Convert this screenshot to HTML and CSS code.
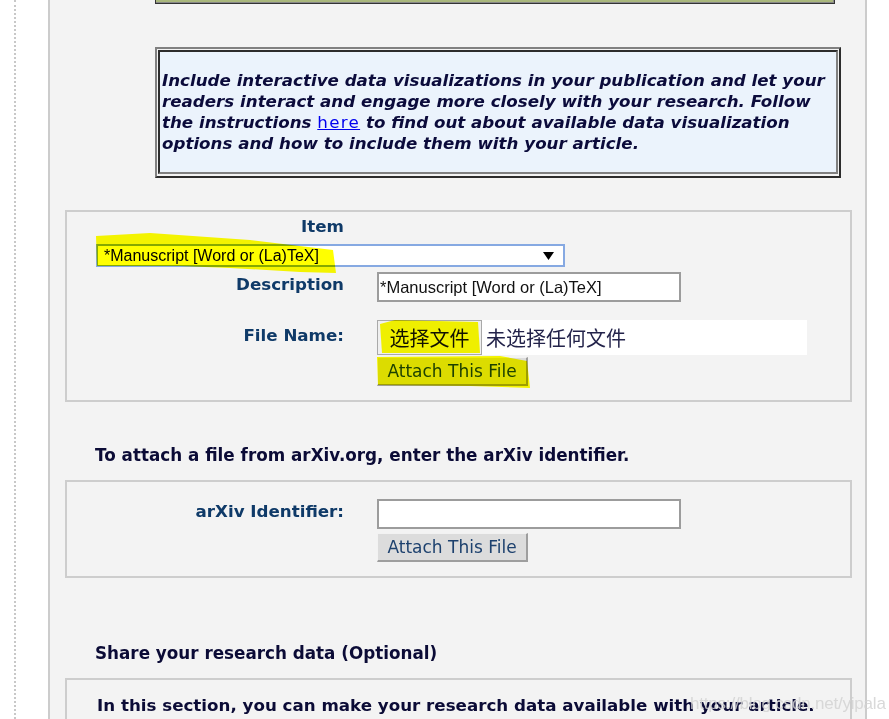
FILE: index.html
```html
<!DOCTYPE html>
<html>
<head>
<meta charset="utf-8">
<link rel="stylesheet" href="styles.css">
</head>
<body>
<div class="page">
  <div class="gutter"></div>
  <div class="panel">
    <div class="topbox"></div>
    <div class="info">
      <div class="info-inner">
        <p class="info-text">Include interactive data visualizations in your publication and let your readers interact and engage more closely with your research. Follow the instructions <a href="#" class="link">here</a> to find out about available data visualization options and how to include them with your article.</p>
      </div>
    </div>

    <div class="box upload">
      <div class="row row-item"><div class="label">Item</div></div>
      <div class="select">
        <span class="select-text">*Manuscript [Word or (La)TeX]</span>
        <svg class="arrow" width="11" height="8" viewBox="0 0 11 8"><path d="M0 0H11L5.5 8Z" fill="#000"/></svg>
      </div>
      <div class="row row-desc">
        <div class="label">Description</div>
        <div class="field"><div class="text-input">*Manuscript [Word or (La)TeX]</div></div>
      </div>
      <div class="row row-file">
        <div class="label label-file">File Name:</div>
        <div class="field">
          <div class="file">
            <span class="choose">选择文件</span>
            <span class="nofile">未选择任何文件</span>
          </div>
          <span class="btn">Attach This File</span>
        </div>
      </div>
    </div>

    <p class="heading heading-arxiv">To attach a file from arXiv.org, enter the arXiv identifier.</p>

    <div class="box arxiv">
      <div class="row row-arxiv">
        <div class="label">arXiv Identifier:</div>
        <div class="field">
          <div class="text-input"></div>
          <span class="btn btn-arxiv">Attach This File</span>
        </div>
      </div>
    </div>

    <p class="heading heading-share">Share your research data (Optional)</p>

    <div class="box share">
      <p class="share-text">In this section, you can make your research data available with your article.</p>
    </div>
  </div>
</div>

<svg class="highlight" width="889" height="719" viewBox="0 0 889 719">
  <polygon points="96,236 150,233 250,240 333,250 336,273 300,272 230,268 180,266 97,266" fill="#ffff00"/>
  <polygon points="380,324 395,320 478,322 480,353 382,353" fill="#ffff00"/>
  <polygon points="377,357 500,356 527,361 530,388 470,386 378,385" fill="#ffff00"/>
</svg>
<div class="watermark">https://blog.csdn.net/yipala</div>
</body>
</html>
```

FILE: styles.css
```css
html, body {
  margin: 0;
  padding: 0;
  overflow: hidden;
  background: #ffffff;
}
body {
  position: relative;
  width: 889px;
  height: 719px;
  font-family: "DejaVu Sans", Verdana, sans-serif;
}
.page {
  display: flex;
  align-items: flex-start;
}
.gutter {
  width: 14px;
  height: 719px;
  border-right: 2px dotted #c8c8c8;
}
.panel {
  margin-left: 32px;
  width: 815px;
  height: 719px;
  overflow: hidden;
  background: #f3f3f3;
  border-left: 2px solid #cccccc;
  border-right: 2px solid #cccccc;
}
.topbox {
  margin-left: 105px;
  width: 680px;
  height: 4px;
  box-sizing: border-box;
  background: #a9b77c;
  border-left: 1px solid #333;
  border-right: 1px solid #333;
  border-bottom: 1px solid #333;
  box-shadow: inset -1px -1px 0 #888;
}
.info {
  margin-left: 105px;
  margin-top: 43px;
  width: 686px;
  box-sizing: border-box;
  padding: 1px 1px 2px 1px;
  border: 2px solid;
  border-color: #808080 #2c2c2c #2c2c2c #808080;
}
.info-inner {
  border: 2px solid;
  border-color: #2c2c2c #808080 #808080 #2c2c2c;
  background: #ebf3fc;
  padding: 18px 4px 18px 2px;
}
.info-text {
  margin: 0;
  font-size: 16.7px;
  line-height: 21px;
  font-weight: bold;
  font-style: italic;
  color: #0b0b3b;
}
.link {
  color: #0000ee;
  font-weight: normal;
  font-style: normal;
  letter-spacing: 1.3px;
  text-decoration: underline;
}
.box {
  margin-left: 15px;
  width: 787px;
  box-sizing: border-box;
  border: 2px solid #cdcdcd;
}
.upload {
  margin-top: 32px;
  padding: 4px 0 14px 0;
}
.row {
  display: flex;
  align-items: flex-start;
  gap: 33px;
}
.label {
  width: 277px;
  flex: none;
  text-align: right;
  font-size: 16.7px;
  font-weight: bold;
  color: #0f3a68;
  line-height: 20px;
}
.select {
  margin: 8px 0 0 29px;
  width: 469px;
  height: 23px;
  box-sizing: border-box;
  border: 2px solid #86a9e2;
  background: #fff;
  display: flex;
  align-items: center;
  justify-content: space-between;
  padding: 0 9px 0 6px;
}
.select-text {
  font-family: "Liberation Sans", Arial, sans-serif;
  font-size: 16px;
  color: #000;
}
.arrow {
  display: block;
}
.row-desc {
  margin-top: 5px;
}
.row-desc .label {
  line-height: 24px;
}
.text-input {
  width: 304px;
  height: 30px;
  box-sizing: border-box;
  border: 2px solid #9c9c9c;
  background: #fff;
  font-family: "Liberation Sans", Arial, sans-serif;
  font-size: 16.5px;
  line-height: 26px;
  padding-left: 1px;
  color: #111;
}
.field {
  display: flex;
  flex-direction: column;
  align-items: flex-start;
}
.row-file {
  margin-top: 18px;
}
.label-file {
  line-height: 30px;
}
.file {
  width: 430px;
  height: 35px;
  background: #fff;
  display: flex;
  align-items: center;
  font-family: "Noto Sans CJK SC", sans-serif;
  font-size: 20px;
}
.choose {
  width: 105px;
  height: 35px;
  box-sizing: border-box;
  border: 1px solid #a9a9a9;
  background: #efefef;
  color: #111;
  display: flex;
  align-items: center;
  justify-content: center;
}
.nofile {
  margin-left: 4px;
  color: #23234a;
}
.btn {
  margin-top: 2px;
  width: 151px;
  height: 29px;
  box-sizing: border-box;
  display: flex;
  align-items: center;
  justify-content: center;
  background: #dcdcdc;
  border-top: 1px solid #f2f2f2;
  border-left: 1px solid #f2f2f2;
  border-right: 2px solid #9e9e9e;
  border-bottom: 2px solid #9e9e9e;
  color: #1d416e;
  font-size: 17px;
}
.btn-arxiv {
  margin-top: 4px;
}
.heading {
  margin: 0 0 0 45px;
  font-size: 16.8px;
  line-height: 20px;
  font-weight: bold;
  color: #0b0b36;
}
.heading-arxiv {
  margin-top: 43px;
}
.arxiv {
  margin-top: 15px;
  padding: 17px 0 14px 0;
}
.row-arxiv .label {
  line-height: 24px;
}
.heading-share {
  margin-top: 65px;
}
.share {
  margin-top: 15px;
  padding: 15px 0 30px 30px;
}
.share-text {
  margin: 0;
  font-size: 16.7px;
  line-height: 20px;
  font-weight: bold;
  color: #0b0b36;
}
.highlight {
  position: absolute;
  left: 0;
  top: 0;
  pointer-events: none;
  mix-blend-mode: multiply;
}
.watermark {
  position: absolute;
  left: 690px;
  top: 694px;
  font-family: "Liberation Sans", Arial, sans-serif;
  font-size: 17px;
  letter-spacing: -0.2px;
  color: rgba(210, 210, 210, 0.85);
}
```
